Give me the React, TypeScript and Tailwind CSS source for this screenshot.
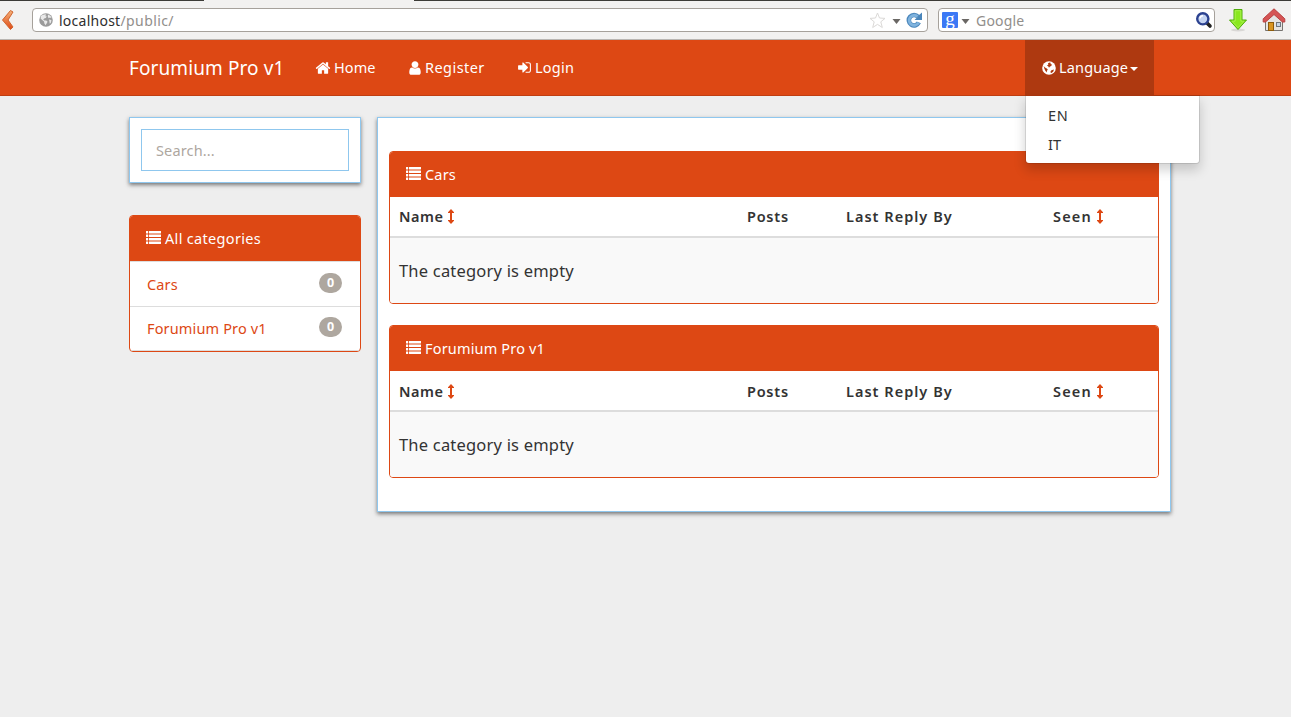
import type { ReactNode } from 'react';

const paths = {
  home: 'M1472 992v480q0 26-19 45t-45 19h-384v-384h-256v384h-384q-26 0-45-19t-19-45v-480q0-1 .5-3t.5-3l575-474 575 474q1 2 1 6zm223-69l-62 74q-8 9-21 11h-3q-13 0-21-7l-692-577-692 577q-12 8-24 7-13-2-21-11l-62-74q-8-10-7-23.5t11-21.5l719-599q32-26 76-26t76 26l244 204v-195q0-14 9-23t23-9h192q14 0 23 9t9 23v408l219 182q10 8 11 21.5t-7 23.5z',
  user: 'M1536 1399q0 109-62.5 187t-150.5 78h-854q-88 0-150.5-78t-62.5-187q0-85 8.5-160.5t31.5-152 58.5-131 94-89 134.5-34.5q131 128 313 128t313-128q76 0 134.5 34.5t94 89 58.5 131 31.5 152 8.5 160.5zm-256-887q0 159-112.5 271.5t-271.5 112.5-271.5-112.5-112.5-271.5 112.5-271.5 271.5-112.5 271.5 112.5 112.5 271.5z',
  login: 'M1312 896q0 26-19 45l-544 544q-19 19-45 19t-45-19-19-45v-288h-448q-26 0-45-19t-19-45v-384q0-26 19-45t45-19h448v-288q0-26 19-45t45-19 45 19l544 544q19 19 19 45zm352-352v704q0 119-84.5 203.5t-203.5 84.5h-320q-13 0-22.5-9.5t-9.5-22.5q0-4-1-20t-.5-26.5 3-23.5 10-19.5 20.5-6.5h320q66 0 113-47t47-113v-704q0-66-47-113t-113-47h-312l-11.5-1-11.5-3-8-5.5-7-9-2-13.5q0-4-1-20t-.5-26.5 3-23.5 10-19.5 20.5-6.5h320q119 0 203.5 84.5t84.5 203.5z',
};

function Glyph({ d, className }: { d: string; className: string }) {
  return (
    <svg viewBox="0 0 1792 1792" fill="currentColor" className={`shrink-0 ${className}`}>
      <path d={d} />
    </svg>
  );
}

function ListIcon() {
  return (
    <svg width="15" height="13" viewBox="0 0 15 13" fill="currentColor" className="-mt-px shrink-0">
      {[0, 3.5, 7, 10.5].map((y) => (
        <g key={y}>
          <rect x="0" y={y} width="2.2" height="2.4" rx="0.3" />
          <rect x="3" y={y} width="12" height="2.4" rx="0.3" />
        </g>
      ))}
    </svg>
  );
}

function SortIcon() {
  return (
    <svg width="6" height="15" viewBox="0 0 6 15" fill="#dd4814" className="shrink-0">
      <path d="M3 0L6 3.2V4H4V11H6V11.8L3 15L0 11.8V11H2V4H0V3.2Z" />
    </svg>
  );
}

function Globe({ size }: { size: number }) {
  return (
    <svg width={size} height={size} viewBox="0 0 14 14" className="shrink-0">
      <circle cx="7" cy="7" r="6.8" fill="#9b9b9b" />
      <path
        d="M2 2.8L4.2 1.8L6.4 1.2L7.4 2L6 3L7.8 3.6L6.8 5L5.2 5.6L4.2 6.6L5.4 7.4L7.2 7.6L8.6 8.8L7.6 10.4L6.6 12.2L5.4 10.4L5 8.6L3.2 7L1.6 5.4Z M9 1.4L11.6 3L12.6 5.2L11 4.6L9.6 5.2L8.8 3.6Z M10 6.4L12.4 7L12 9.6L10.8 10.8L10.4 8.4Z"
        fill="#e9e9e9"
      />
    </svg>
  );
}

function LanguageGlobe() {
  return (
    <svg width="14" height="14" viewBox="0 0 14 14" className="shrink-0">
      <circle cx="7" cy="7" r="6.8" fill="#fff" />
      <path
        d="M6 2.2L7.6 1.4L9 2L8.2 3L10 3.6L9.2 5L8 5.6L7 6.8L6.4 5.4L5 4.6L6.4 3.6Z M1.6 5L3 6.6L4.8 7.6L5.8 8.6L5 9.8L4.6 11.4L3.2 9.6L2.4 7.8Z M9.4 9.2L12 8.6L11.2 10.8L9 12.2L8.4 10.8Z"
        fill="#ae3910"
      />
    </svg>
  );
}

function Triangle() {
  return (
    <svg width="9" height="5" viewBox="0 0 9 5" className="shrink-0">
      <path d="M0.5 0H8.5L4.5 5Z" fill="#6a6764" />
    </svg>
  );
}

function BrowserBar() {
  return (
    <div className="flex h-10 flex-col border-b border-[#b9b5b1] bg-[#f2f1f0]">
      <div className="flex h-px shrink-0">
        <div className="w-[204px] bg-[#3c3b37]" />
        <div className="w-[210px]" />
        <div className="grow bg-[#3c3b37]" />
      </div>
      <div className="flex h-[38px] items-center text-[#2e2e2e]">
        <svg width="14" height="22" viewBox="0 0 14 22" className="ml-px mr-[17px] shrink-0">
          <defs>
            <linearGradient id="back" x1="0" y1="0" x2="0" y2="1">
              <stop offset="0" stopColor="#f5b27a" />
              <stop offset="1" stopColor="#df4a16" />
            </linearGradient>
          </defs>
          <path d="M9.5 1.5L12 3L7 11L12 18L9.5 20.5L1.5 11Z" fill="url(#back)" stroke="#d0652f" strokeLinejoin="round" />
        </svg>
        <div className="flex h-6 w-[896px] shrink-0 items-center rounded-[4px] border border-[#a6a19b] bg-white pl-1.5">
          <Globe size={14} />
          <span className="ml-1.5 whitespace-nowrap text-[14px] tracking-[0.25px]">
            localhost<span className="tracking-[0.42px] text-[#918e8b]">/public/</span>
          </span>
          <svg width="17" height="17" viewBox="0 0 17 17" className="ml-auto shrink-0">
            <path d="M8.5 1L10.5 6L16 6.4L11.8 9.8L13.3 15.5L8.5 12.4L3.7 15.5L5.2 9.8L1 6.4L6.5 6Z" fill="#fff" stroke="#dbd9d7" strokeLinejoin="round" />
          </svg>
          <div className="ml-1.5 mt-0.5"><Triangle /></div>
          <svg width="17" height="16" viewBox="0 0 17 16" className="ml-[5px] mr-1 shrink-0">
            <path d="M12 4.8A5.2 5.2 0 1 0 12.8 10.4" fill="none" stroke="#4a86bb" strokeWidth="4.6" />
            <path d="M16 0.5V8H8.5L11 5.5L13 3Z" fill="#4a86bb" />
            <path d="M11.5 4.5A5 5 0 1 0 12.6 10.6" fill="none" stroke="#7fb3de" strokeWidth="2.8" />
          </svg>
        </div>
        <div className="ml-2.5 flex h-6 w-[277px] shrink-0 items-center rounded-[4px] border border-[#a6a19b] bg-white pl-[3px]">
          <div className="flex size-4 items-center justify-center rounded-[1px] bg-[#3b78f5] pb-1 font-['Liberation_Serif',serif] text-[19px] leading-none text-white">g</div>
          <div className="ml-[3px] mt-0.5"><Triangle /></div>
          <span className="ml-1.5 text-[14px] tracking-[0.2px] text-[#918e8b]">Google</span>
          <svg width="18" height="18" viewBox="0 0 18 18" className="ml-auto mr-px shrink-0">
            <path d="M12 12L15 15" stroke="#222" strokeWidth="3.6" strokeLinecap="round" />
            <circle cx="7.8" cy="7.8" r="5.6" fill="#c5d4f2" stroke="#2c4290" strokeWidth="2.4" />
            <path d="M5 7.4A3 3 0 0 1 8 4.8" stroke="#fff" strokeWidth="1.5" fill="none" />
          </svg>
        </div>
        <svg width="20" height="24" viewBox="0 0 20 24" className="ml-[13px] shrink-0">
          <ellipse cx="10" cy="22" rx="7" ry="1.5" fill="#d9d7d5" />
          <path d="M6 1.5H14V12H18.5L10 21.5L1.5 12H6Z" fill="#8ae81e" stroke="#4faa0b" strokeLinejoin="round" />
          <path d="M7.2 2.7H12.8V13.2H16L10 19.8L4 13.2H7.2Z" fill="none" stroke="#a5f04a" />
        </svg>
        <svg width="24" height="24" viewBox="0 0 24 24" className="ml-[14px] shrink-0">
          <path d="M3.5 11L12 4L20.5 11V22.5H3.5Z" fill="#e5e4e2" stroke="#77736f" />
          <path d="M12 0.8L22.8 10.8V14H20.5L12 6.5L3.5 14H1.2V10.8Z" fill="#d55454" stroke="#b94040" strokeLinejoin="round" />
          <rect x="6.5" y="14.5" width="5" height="8" fill="#d89522" stroke="#8d5b0b" />
          <rect x="14.5" y="14.5" width="4" height="4" fill="#c5d6e8" stroke="#6f7780" />
        </svg>
      </div>
    </div>
  );
}

function Navbar() {
  return (
    <nav className="flex h-14 border-b border-[#bf3e11] bg-[#dd4814] pl-[129px] text-[14.5px] text-white">
      <a className="flex w-[186px] items-center whitespace-nowrap pt-px text-[19px] tracking-[0.1px]">Forumium Pro v1</a>
      <a className="flex w-[93px] items-center gap-[3px]"><Glyph d={paths.home} className="size-[16px]" /><span className="tracking-[0.1px]">Home</span></a>
      <a className="flex w-[110px] items-center gap-[2px]"><Glyph d={paths.user} className="-ml-px size-[16px]" /><span className="tracking-[0.45px]">Register</span></a>
      <a className="flex items-center gap-[3px]"><Glyph d={paths.login} className="-ml-px size-[15px]" /><span className="tracking-[0.25px]">Login</span></a>
      <div className="relative ml-auto mr-[137px] h-14 w-[129px]">
        <div className="flex h-[55px] items-center bg-[#ae3910] pl-[16.5px]">
          <LanguageGlobe />
          <span className="ml-[3.5px] tracking-[0.17px]">Language</span>
          <svg width="8" height="4" viewBox="0 0 8 4" className="ml-[2px] mt-0.5 shrink-0"><path d="M0 0H8L4 4Z" fill="#fff" /></svg>
        </div>
        <div className="absolute left-0 top-[55px] z-10 flex h-[69px] w-[175px] flex-col rounded-b-[4px] border border-black/10 bg-white bg-clip-padding pt-[5px] text-[14.5px] leading-[29px] text-[#333] shadow-[0_6px_12px_rgba(0,0,0,0.175)]">
          <a className="pl-[22px] tracking-[0.6px]">EN</a>
          <a className="pl-[22px]">IT</a>
        </div>
      </div>
    </nav>
  );
}

function PanelHeading({ children }: { children: ReactNode }) {
  return (
    <div className="flex h-[46px] items-center gap-1 bg-[#dd4814] pl-[17px] text-[14.5px] text-white">
      <ListIcon />
      <span className="pt-0.5">{children}</span>
    </div>
  );
}

function Category({ name, headPadding = '' }: { name: string; headPadding?: string }) {
  return (
    <section className="flex h-[153px] flex-col overflow-hidden rounded-[4px] border border-[#dd4814] bg-white">
      <div className="-mx-px -mt-px">
        <PanelHeading><span className="tracking-[0.17px]">{name}</span></PanelHeading>
      </div>
      <div className={`grid h-[41px] grid-cols-[348px_99px_207px_1fr] items-center border-b-2 border-[#dddddd] pl-[9px] text-[14.5px] font-semibold text-[#333] ${headPadding}`}>
        <span className="flex items-center gap-[5px]"><span className="tracking-[0.5px]">Name</span><SortIcon /></span>
        <span className="tracking-[0.75px]">Posts</span>
        <span className="tracking-[1.02px]">Last Reply By</span>
        <span className="flex items-center gap-[5px]"><span className="tracking-[1.2px]">Seen</span><SortIcon /></span>
      </div>
      <div className="flex grow items-center bg-[#f9f9f9] pl-[9px] pt-0.5 text-[16.5px] tracking-[0.2px] text-[#333]"><span>The category is empty</span></div>
    </section>
  );
}

function CategoryLink({ name }: { name: string }) {
  return (
    <a className="flex h-11 items-center justify-between border-b border-[#dddddd] pb-1 pl-[17px] pr-[18px] text-[14.5px] text-[#dd4814]">
      <span className="pt-1 tracking-[0.15px]">{name}</span>
      <span className="flex h-5 w-[23px] items-center justify-center rounded-[10px] bg-[#aea79f] pt-px text-[12.5px] font-bold text-white">0</span>
    </a>
  );
}

export default function App() {
  return (
    <div className="min-h-[717px] bg-[#eeeeee] font-['Noto_Sans',sans-serif]">
      <BrowserBar />
      <Navbar />
      <main className="flex items-start gap-4 pl-[129px] pt-[21px]">
        <aside className="flex w-[232px] flex-col gap-8">
          <div className="h-[66px] border border-[#8fc7ee] bg-white p-[11px] shadow-[0_2px_4px_rgba(0,0,0,0.5)]">
            <input placeholder="Search..." className="h-[42px] w-full border border-[#8fc7ee] px-[14px] text-[14.5px] tracking-[0.15px] placeholder:text-[#aea79f]" />
          </div>
          <section className="h-[137px] overflow-hidden rounded-[4px] border border-[#dd4814] bg-white">
            <div className="-mx-px -mt-px">
              <PanelHeading><span className="tracking-[0.32px]">All categories</span></PanelHeading>
            </div>
            <div className="border-t border-[#dddddd] pt-px">
              <CategoryLink name="Cars" />
              <CategoryLink name="Forumium Pro v1" />
            </div>
          </section>
        </aside>
        <div className="flex h-[395px] w-[794px] flex-col gap-[21px] border border-[#8fc7ee] bg-white px-[11px] pt-[33px] shadow-[0_2px_4px_rgba(0,0,0,0.5)]">
          <Category name="Cars" />
          <Category name="Forumium Pro v1" headPadding="pt-0.5" />
        </div>
      </main>
    </div>
  );
}
